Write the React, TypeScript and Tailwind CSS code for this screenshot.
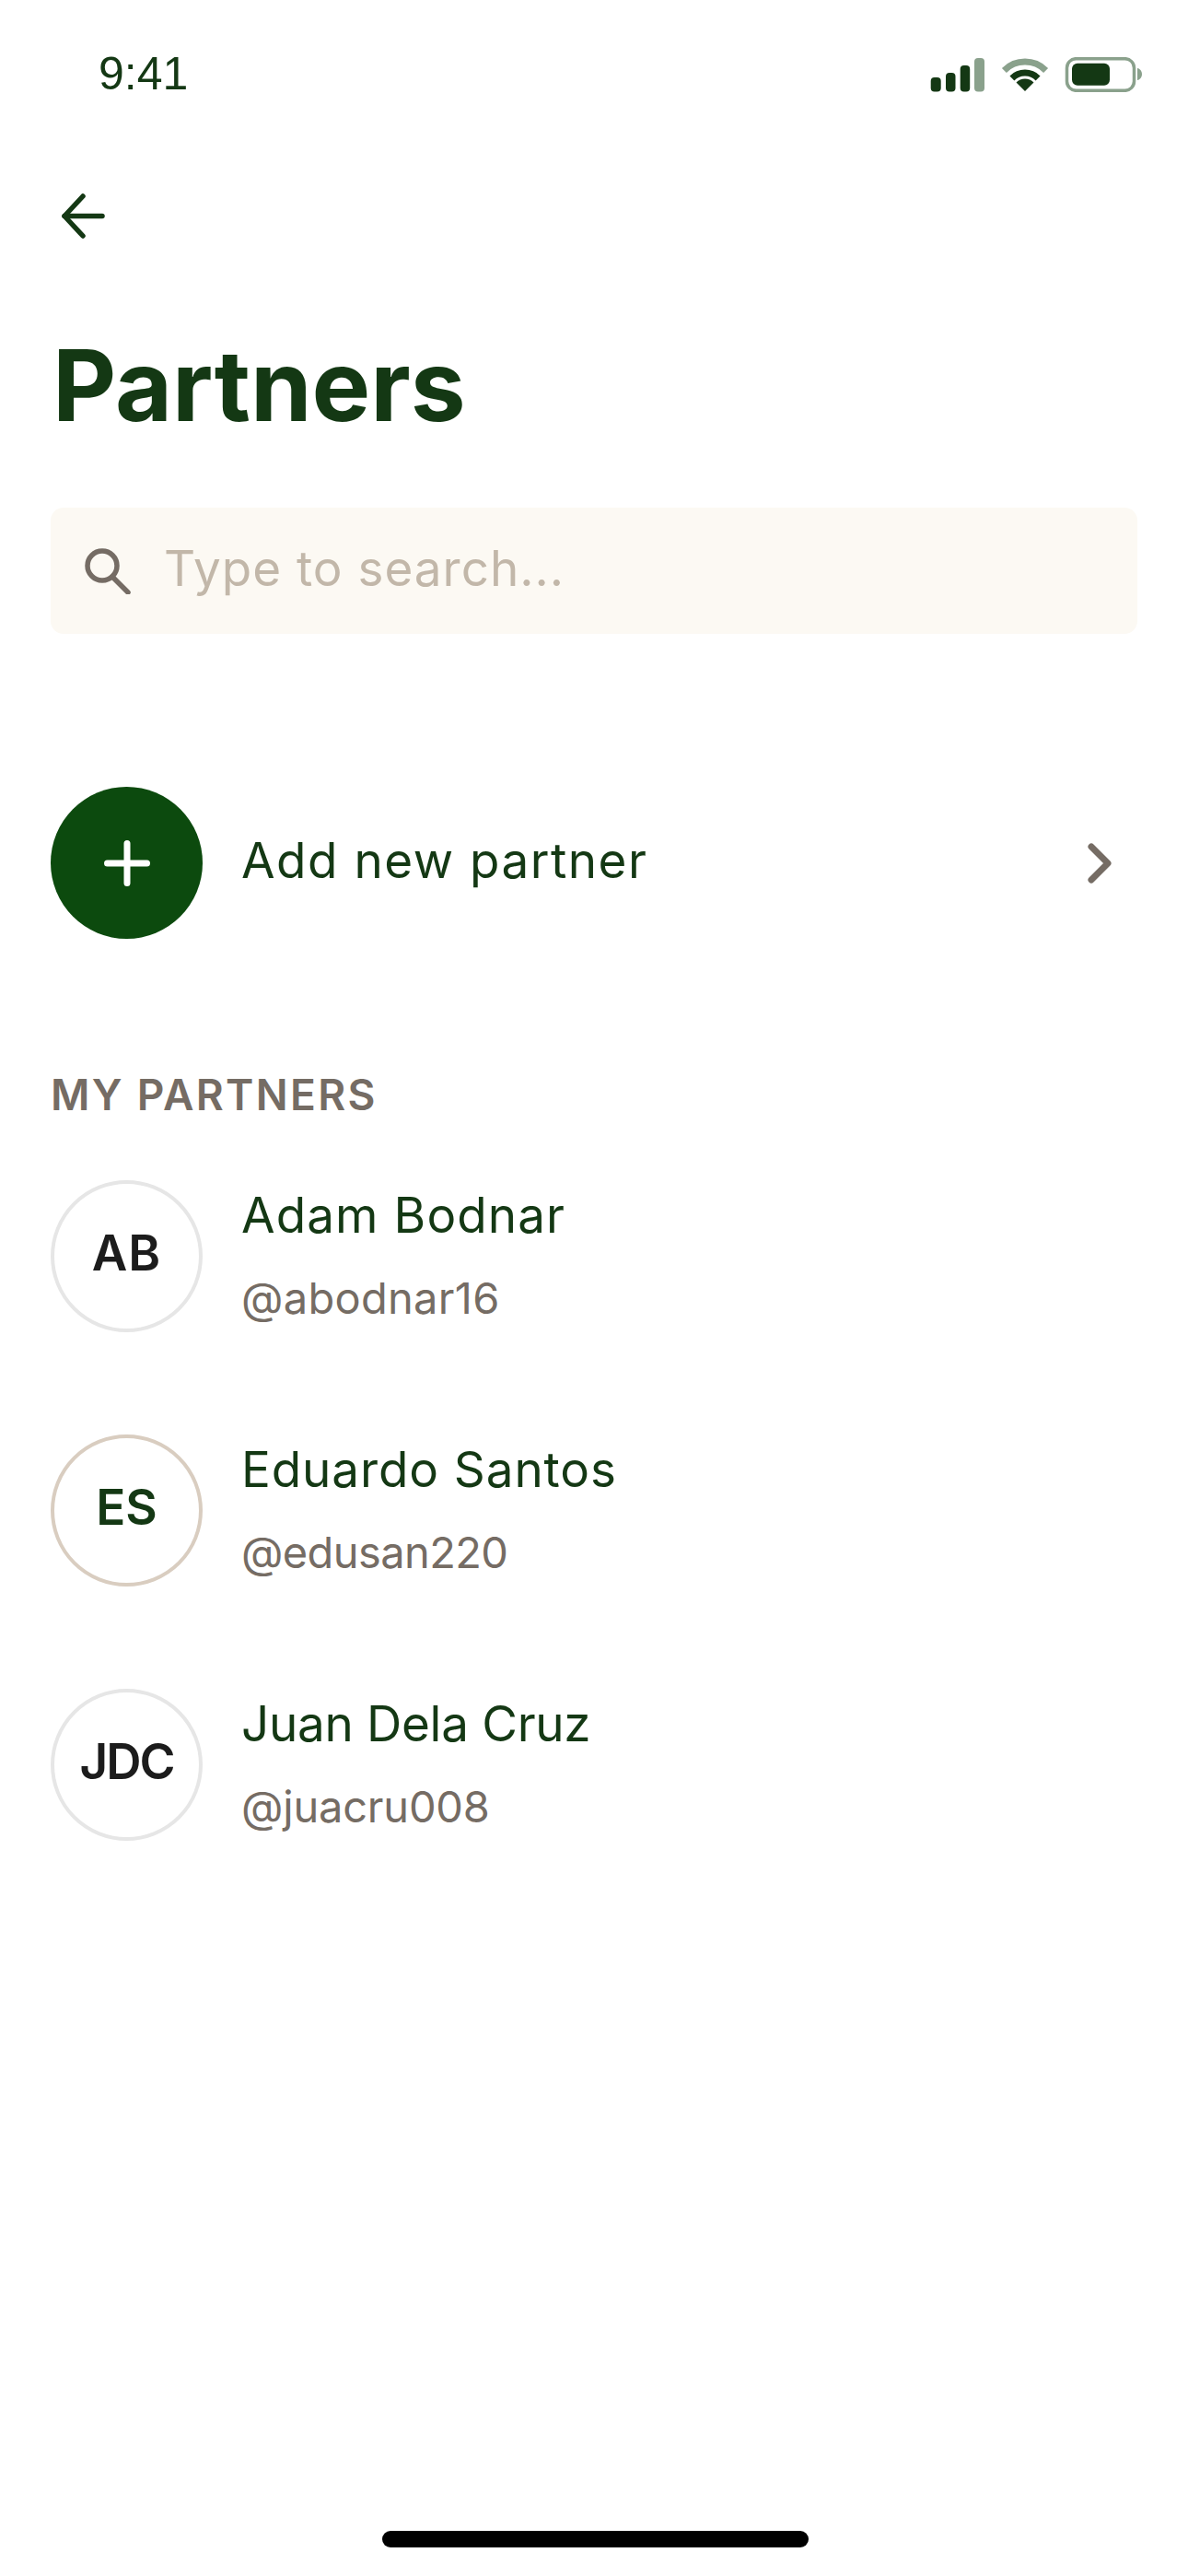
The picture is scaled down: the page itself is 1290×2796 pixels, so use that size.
import React from "react";

const G = "#143814";
const M = "#8aa18c";

function StatusIcons() {
  return (
    <svg width="230" height="38" viewBox="0 0 230 38" fill="none">
      <rect x="0.7" y="22" width="11" height="15.5" rx="4" fill={G} />
      <rect x="17" y="17" width="10.5" height="20.5" rx="4" fill={G} />
      <rect x="32.7" y="9" width="10.5" height="28.5" rx="4" fill={G} />
      <rect x="48" y="1" width="11" height="36.5" rx="4" fill={M} />
      <path d="M80.4 14.4A32 32 0 0 1 125.6 14.4" stroke={M} strokeWidth="7" />
      <path d="M88.9 22.9A20 20 0 0 1 117.1 22.9" stroke={G} strokeWidth="7" />
      <path d="M103 37L93.5 27.5A13.4 13.4 0 0 1 112.5 27.5Z" fill={G} />
      <rect x="148.5" y="1.7" width="73" height="34.6" rx="10" stroke={M} strokeWidth="3.5" />
      <rect x="154" y="6.7" width="41" height="24" rx="6" fill={G} />
      <path d="M225 12C228 12.5 230 15.5 230 18.5C230 21.5 228 24.5 225 25Z" fill={M} />
    </svg>
  );
}

function Row({ initials, name, handle, border, color, track, handleTrack, initialsTrack }: { initials: string; name: string; handle: string; border: string; color: string; track: string; handleTrack: string; initialsTrack: string }) {
  return (
    <div className="flex items-center gap-[42px] h-[165px]">
      <div className={`w-[165px] h-[165px] shrink-0 rounded-full border-[4px] flex items-center justify-center pb-[6px] text-[53px] leading-none font-semibold ${initialsTrack} ${border} ${color}`}>
        {initials}
      </div>
      <div className="flex flex-col pb-[4px]">
        <div className={`text-[53px] leading-[64px] text-[#143814] ${track}`}>{name}</div>
        <div className={`mt-[30px] text-[47px] leading-[56px] text-[#756c64] ${handleTrack}`}>{handle}</div>
      </div>
    </div>
  );
}

export default function App() {
  return (
    <div className="relative w-[1290px] h-[2796px] bg-white overflow-hidden font-['Inter',sans-serif]">
      <div className="flex items-start justify-between h-[210px] pl-[107px] pr-[50px] pt-[50px]">
        <div className="pt-[2px] font-['Liberation_Sans',sans-serif] text-[50px] leading-[56px] text-[#143814]">9:41</div>
        <div className="pt-[12px]"><StatusIcons /></div>
      </div>

      <div className="pl-[66px] h-[70px]">
        <svg width="50" height="50" viewBox="0 0 50 50" fill="none" stroke={G} strokeWidth="5.5" strokeLinecap="round" strokeLinejoin="round">
          <path d="M4 24.5H45" />
          <path d="M24 3L4 24.5L24 46" />
        </svg>
      </div>

      <div className="px-[55px]">
        <h1 className="mt-[73px] pl-[2px] text-[107px] leading-[130px] font-bold text-[#143814]">Partners</h1>

        <div className="mt-[68px] h-[137px] rounded-[14px] bg-[#fcf9f3] flex items-center pl-[37px]">
          <svg width="50" height="50" viewBox="0 0 50 50" fill="none" stroke="#756c64" strokeLinecap="round">
            <circle cx="19" cy="19" r="16" strokeWidth="5.5" />
            <path d="M30 31L47 48" strokeWidth="5.5" />
          </svg>
          <span className="ml-[36px] pb-[4px] text-[53px] leading-none tracking-[1px] text-[#c2b7a9]">Type to search...</span>
        </div>

        <div className="mt-[166px] flex items-center h-[165px]">
          <div className="w-[165px] h-[165px] shrink-0 rounded-full bg-[#0c4a0e] flex items-center justify-center">
            <svg width="50" height="50" viewBox="0 0 50 50" fill="none" stroke="#ffffff" strokeWidth="7" strokeLinecap="round">
              <path d="M25 3.5V46.5M3.5 25H46.5" />
            </svg>
          </div>
          <span className="ml-[42px] pb-[4px] text-[53px] leading-none tracking-[1.5px] text-[#143814]">Add new partner</span>
          <svg width="30" height="46" viewBox="0 0 30 46" fill="none" stroke="#756c64" strokeWidth="7" strokeLinecap="round" strokeLinejoin="round" className="ml-auto mr-[26px]">
            <path d="M6 5L24 23L6 41" />
          </svg>
        </div>

        <div className="mt-[141px] text-[46px] leading-[56px] font-semibold tracking-[2.3px] text-[#756c64]">MY PARTNERS</div>

        <div className="mt-[65px] flex flex-col gap-[111px]">
          <Row initials="AB" name="Adam Bodnar" handle="@abodnar16" border="border-[#e6e6e6]" color="text-[#1c1c1c]" track="tracking-[1.1px]" handleTrack="tracking-[0.3px]" initialsTrack="tracking-[1px]" />
          <Row initials="ES" name="Eduardo Santos" handle="@edusan220" border="border-[#d9cdc0]" color="text-[#143814]" track="tracking-[0.9px]" handleTrack="tracking-[-0.6px]" initialsTrack="tracking-[0px]" />
          <Row initials="JDC" name="Juan Dela Cruz" handle="@juacru008" border="border-[#e6e6e6]" color="text-[#1c1c1c]" track="tracking-[-0.3px]" handleTrack="tracking-[-0.2px]" initialsTrack="tracking-[-2px]" />
        </div>
      </div>

      <div className="absolute left-[415px] bottom-[31px] w-[463px] h-[18px] rounded-[9px] bg-black" />
    </div>
  );
}
